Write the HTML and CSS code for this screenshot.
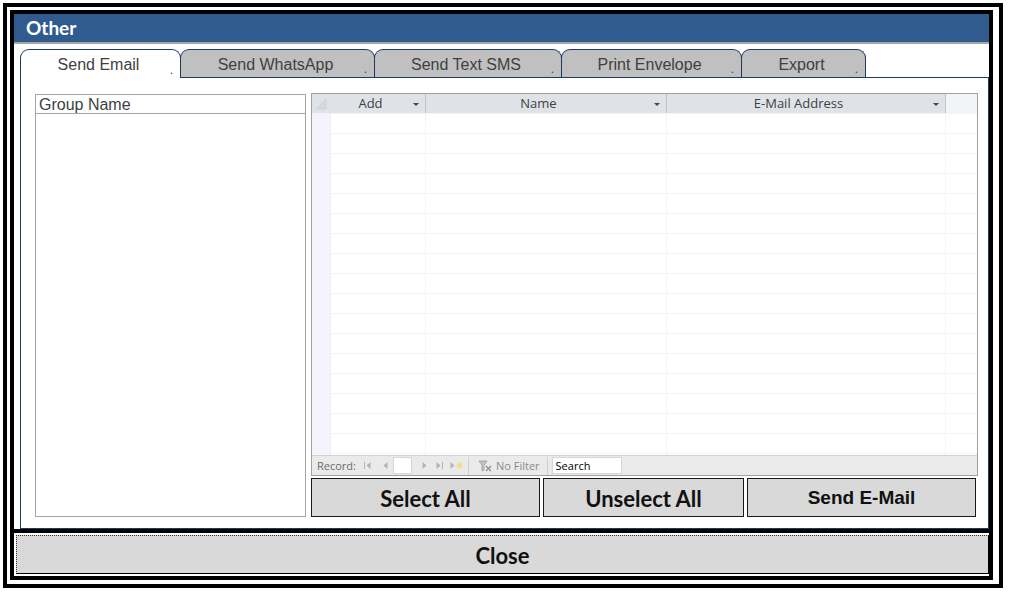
FILE: index.html
```html
<!DOCTYPE html>
<html lang="en">
<head>
    <meta charset="UTF-8">
    <title>Other</title>
    <link rel="stylesheet" href="styles.css">
</head>
<body>
    <div class="frame">
        <div class="window">
            <div class="titlebar">Other</div>
            <div class="tabs">
                <div class="tab active w1">Send Email<span class="tab-dot">.</span></div>
                <div class="tab w2">Send WhatsApp<span class="tab-dot">.</span></div>
                <div class="tab w3">Send Text SMS<span class="tab-dot">.</span></div>
                <div class="tab w4">Print Envelope<span class="tab-dot">.</span></div>
                <div class="tab w5">Export<span class="tab-dot">.</span></div>
            </div>
            <div class="panel">
                <div class="group-list">
                    <div class="group-head">Group Name</div>
                </div>
                <div class="main">
                    <div class="grid">
                        <div class="grid-head">
                            <div class="hcell sel">
                                <svg width="12" height="12" viewBox="0 0 12 12"><path d="M1 11 L11 1 L11 11 Z" fill="#d6dae0" stroke="#c9cdd3" stroke-width="0.6"/></svg>
                            </div>
                            <div class="hcell c-add"><span class="hlabel">Add</span><span class="arrow"></span></div>
                            <div class="hcell c-name"><span class="hlabel">Name</span><span class="arrow"></span></div>
                            <div class="hcell c-mail"><span class="hlabel">E-Mail Address</span><span class="arrow"></span></div>
                            <div class="hcell c-rest"></div>
                        </div>
                        <div class="grid-body">
                            <div class="bcol sel"></div>
                            <div class="bcol c-add"></div>
                            <div class="bcol c-name"></div>
                            <div class="bcol c-mail"></div>
                            <div class="bcol c-rest"></div>
                        </div>
                        <div class="navbar">
                            <span class="nav-label">Record:</span>
                            <svg class="nav-ic first" width="9" height="9" viewBox="0 0 9 9"><rect x="1" y="1" width="1" height="7"/><path d="M7.5 1 L3.5 4.5 L7.5 8 Z"/></svg>
                            <svg class="nav-ic prev" width="9" height="9" viewBox="0 0 9 9"><path d="M6.5 1 L2.5 4.5 L6.5 8 Z"/></svg>
                            <span class="nav-box"></span>
                            <svg class="nav-ic next" width="9" height="9" viewBox="0 0 9 9"><path d="M2.5 1 L6.5 4.5 L2.5 8 Z"/></svg>
                            <svg class="nav-ic last" width="9" height="9" viewBox="0 0 9 9"><path d="M1.5 1 L5.5 4.5 L1.5 8 Z"/><rect x="7" y="1" width="1" height="7"/></svg>
                            <svg class="nav-ic new" width="15" height="9" viewBox="0 0 15 9"><path d="M1.5 1 L5.5 4.5 L1.5 8 Z"/><path d="M10.5 1 V8 M7 4.5 H14 M8 2 L13 7 M13 2 L8 7" stroke="#f0dc8c" stroke-width="1.2"/></svg>
                            <span class="nav-sep"></span>
                            <svg class="nav-filter" width="14" height="12" viewBox="0 0 14 12"><path d="M1 1 H9 L6 5 V10 L4 11 V5 Z" fill="#c4c4c4" stroke="#9a9a9a" stroke-width="0.8"/><path d="M8 6 L13 11 M13 6 L8 11" stroke="#8d8d8d" stroke-width="1.2"/></svg>
                            <span class="nav-text">No Filter</span>
                            <span class="nav-sep second"></span>
                            <span class="nav-search">Search</span>
                        </div>
                    </div>
                    <div class="actions">
                        <button class="btn select">Select All</button>
                        <button class="btn unselect">Unselect All</button>
                        <button class="btn send">Send E-Mail</button>
                    </div>
                </div>
            </div>
            <div class="divider"></div>
            <button class="close-btn">Close</button>
        </div>
    </div>
</body>
</html>
```

FILE: styles.css
```css
* {
    box-sizing: border-box;
    margin: 0;
    padding: 0;
}
body {
    background: #ffffff;
    font-family: "Liberation Sans", Arial, sans-serif;
    overflow: hidden;
}
.frame {
    border: 4px solid #000;
    height: 585px;
    margin: 3px;
    padding: 3px;
    width: 1000px;
}
.window {
    border: 4px solid #000;
    display: flex;
    flex-direction: column;
    height: 570px;
    width: 983px;
}
.titlebar {
    background: #2f5b8e;
    border-bottom: 2px solid #a6a6a6;
    color: #fff;
    font-family: Lato, "Liberation Sans", sans-serif;
    font-size: 19px;
    font-weight: 700;
    height: 30px;
    line-height: 28px;
    padding-left: 12px;
}

/* tabs */
.tabs {
    display: flex;
    height: 28px;
    margin: 5px 0 0 6px;
}
.tab {
    background: #c0c0c0;
    border: 1px solid #1f3a60;
    border-bottom: none;
    border-radius: 9px 9px 0 0;
    color: #3f3f3f;
    font-size: 16px;
    height: 28px;
    line-height: 29px;
    margin-left: -1px;
    padding-right: 4px;
    position: relative;
    text-align: center;
}
.tab.active {
    background: #fff;
    height: 29px;
    margin-left: 0;
    margin-bottom: -1px;
    z-index: 1;
}
.w1 { width: 161px; }
.w2 { width: 195px; }
.w3 { width: 188px; }
.w4 { width: 181px; }
.w5 { width: 125px; }
.tab-dot {
    bottom: 2px;
    font-size: 12px;
    line-height: 12px;
    position: absolute;
    right: 7px;
}

/* panel */
.panel {
    border: 1px solid #1f3a60;
    display: flex;
    align-items: flex-start;
    height: 452px;
    margin-left: 6px;
    padding: 15px 0 0 14px;
}
.group-list {
    border: 1px solid #a6a6a6;
    height: 423px;
    margin-top: 1px;
    width: 271px;
}
.group-head {
    border-bottom: 1px solid #a6a6a6;
    color: #3f3f3f;
    font-size: 16px;
    height: 19px;
    line-height: 19px;
    padding-left: 3px;
}
.main {
    display: flex;
    flex-direction: column;
    gap: 2px;
    margin-left: 5px;
    width: 667px;
}

/* datasheet */
.grid {
    border: 1px solid #a0a0a0;
    display: flex;
    flex-direction: column;
    height: 383px;
}
.grid-head {
    background: #dfe3e8;
    color: #404040;
    display: flex;
    font-family: "Open Sans", "Noto Sans", sans-serif;
    font-size: 13px;
    height: 19px;
}
.hcell {
    align-items: center;
    border-right: 1px solid #bfc3c8;
    display: flex;
    height: 19px;
    line-height: 17px;
}
.hcell.sel {
    align-items: flex-end;
    border-right: none;
    padding: 0 0 3px 3px;
}
.hcell.c-rest {
    background: #f3f4f6;
    border-right: none;
}
.hlabel {
    flex: 1;
    text-align: center;
}
.arrow {
    border-left: 3px solid transparent;
    border-right: 3px solid transparent;
    border-top: 3px solid #444;
    margin: 1px 6px 0 3px;
    width: 0;
}
.sel { width: 19px; }
.c-add { width: 95px; }
.c-name { width: 241px; }
.c-mail { width: 279px; }
.c-rest { flex: 1; }
.grid-body {
    background: repeating-linear-gradient(to bottom, #f3f3f3 0 1px, transparent 1px 20px);
    display: flex;
    flex: 1;
}
.bcol {
    border-right: 1px solid #f5f5f5;
}
.bcol.sel {
    background: #f4f5fc;
    border-right: 1px solid #eeeff5;
}
.bcol.c-rest {
    border-right: none;
}
.navbar {
    align-items: center;
    background: #eaeaea;
    border-top: 1px solid #d2d2d2;
    display: flex;
    font-family: "Open Sans", "Noto Sans", sans-serif;
    font-size: 11px;
    height: 20px;
    padding-left: 5px;
}
.nav-label {
    color: #6a6a6a;
}
.nav-ic {
    fill: #b4b4b4;
}
.nav-ic.first { margin-left: 7px; }
.nav-ic.prev { margin-left: 9px; }
.nav-box {
    background: #fff;
    border: 1px solid #d6d6d6;
    height: 17px;
    margin-left: 3px;
    width: 19px;
}
.nav-ic.next { margin-left: 8px; }
.nav-ic.last { margin-left: 6px; }
.nav-ic.new { margin-left: 5px; }
.nav-sep {
    background: #cfcfcf;
    height: 18px;
    margin-left: 4px;
    width: 1px;
}
.nav-filter {
    margin-left: 9px;
}
.nav-text {
    color: #8a8a8a;
    margin-left: 4px;
}
.nav-sep.second {
    margin-left: 7px;
}
.nav-search {
    background: #fff;
    border: 1px solid #d6d6d6;
    color: #000;
    height: 17px;
    line-height: 15px;
    margin-left: 4px;
    padding-left: 3px;
    width: 70px;
}

/* buttons */
.actions {
    display: flex;
    gap: 3px;
}
.btn {
    background: #d9d9d9;
    border: 1px solid #1a1a1a;
    color: #111;
    font-family: Lato, "Liberation Sans", sans-serif;
    font-size: 22px;
    font-weight: 700;
    height: 39px;
    padding-top: 1px;
}
.btn.select { width: 229px; }
.btn.unselect { width: 201px; }
.btn.send {
    font-family: "Liberation Sans", Arial, sans-serif;
    font-size: 19px;
    width: 229px;
}
.divider {
    background: #000;
    height: 4px;
}
.close-btn {
    background: #d9d9d9;
    border: 1px solid #000;
    border-left: 1px dotted #333;
    border-top: 1px dotted #333;
    color: #111;
    font-family: Lato, "Liberation Sans", sans-serif;
    font-size: 22px;
    font-weight: 700;
    height: 39px;
    margin: 2px 0 2px 2px;
    padding-top: 1px;
    width: 973px;
}
```
